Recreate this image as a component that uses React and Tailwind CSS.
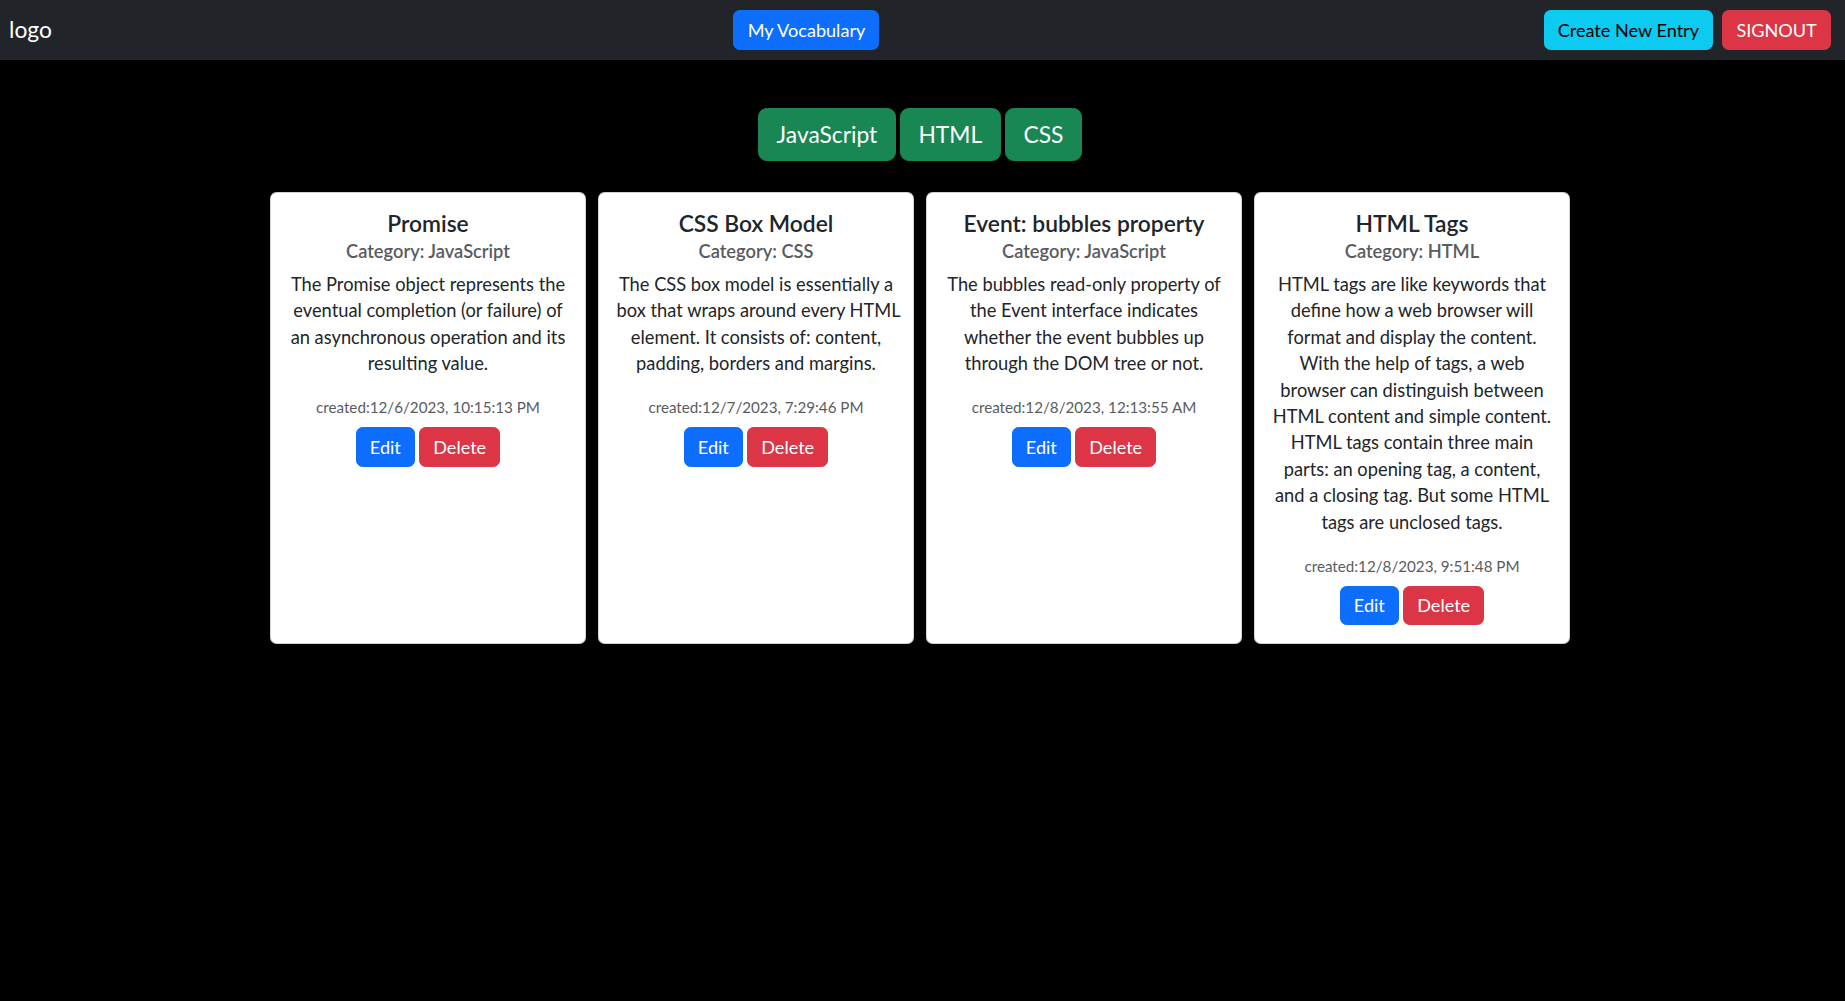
import React from "react";

const cards = [
  {
    title: "Promise",
    category: "JavaScript",
    lines: [
      "The Promise object represents the",
      "eventual completion (or failure) of",
      "an asynchronous operation and its",
      "resulting value.",
    ],
    created: "created:12/6/2023, 10:15:13 PM",
  },
  {
    title: "CSS Box Model",
    category: "CSS",
    lines: [
      "The CSS box model is essentially a",
      "box that wraps around every HTML",
      "element. It consists of: content,",
      "padding, borders and margins.",
    ],
    created: "created:12/7/2023, 7:29:46 PM",
  },
  {
    title: "Event: bubbles property",
    category: "JavaScript",
    lines: [
      "The bubbles read-only property of",
      "the Event interface indicates",
      "whether the event bubbles up",
      "through the DOM tree or not.",
    ],
    created: "created:12/8/2023, 12:13:55 AM",
  },
  {
    title: "HTML Tags",
    category: "HTML",
    lines: [
      "HTML tags are like keywords that",
      "define how a web browser will",
      "format and display the content.",
      "With the help of tags, a web",
      "browser can distinguish between",
      "HTML content and simple content.",
      "HTML tags contain three main",
      "parts: an opening tag, a content,",
      "and a closing tag. But some HTML",
      "tags are unclosed tags.",
    ],
    created: "created:12/8/2023, 9:51:48 PM",
  },
];

const btn =
  "text-[18.1px] leading-[24.2px] px-[13.2px] py-[6.6px] border rounded-[6.6px]";

function Card({ card }) {
  return (
    <div className="w-[316px] bg-white rounded-[6.6px] border border-[rgba(0,0,0,0.175)] p-[17.6px] text-center">
      <h5 className="text-[22.8px] leading-[26.4px] font-semibold text-[#212529] mb-[8.8px]">
        {card.title}
      </h5>
      <h6 className="text-[18.3px] leading-[21.1px] font-semibold text-[#595c5f] mt-[-4.4px] mb-[8.8px]">
        Category: {card.category}
      </h6>
      <p className="text-[18.3px] leading-[26.4px] text-[#212529] mb-[17.6px]">
        {card.lines.map((l, i) => (
          <span key={i} className="block whitespace-nowrap">
            {l}
          </span>
        ))}
      </p>
      <div className="text-[18.3px] leading-[25px] mb-[7px]">
        <small className="text-[15.2px] text-[#595c5f]">{card.created}</small>
      </div>
      <div className="flex justify-center gap-[4px]">
        <button className={`${btn} bg-[#0d6efd] text-white border-[#0d6efd]`}>Edit</button>
        <button className={`${btn} bg-[#dc3545] text-white border-[#dc3545]`}>Delete</button>
      </div>
    </div>
  );
}

export default function App() {
  return (
    <div className="min-h-[1001px] bg-black font-['Lato','Noto_Sans',sans-serif]">
      <nav className="h-[60px] bg-[#212529] flex items-center justify-between pl-[9px] pr-[14px]">
        <div className="text-[22.8px] leading-[30px] text-white mr-[17.6px] pb-[3px]">logo</div>
        <button className={`${btn} bg-[#0d6efd] text-white border-[#0d6efd]`}>
          My Vocabulary
        </button>
        <div className="flex gap-[9px]">
          <button className={`${btn} bg-[#0dcaf0] text-black border-[#0dcaf0]`}>
            Create New Entry
          </button>
          <button className={`${btn} bg-[#dc3545] text-white border-[#dc3545]`}>
            SIGNOUT
          </button>
        </div>
      </nav>
      <main className="pr-[5px]">
        <div className="flex justify-center gap-[4px] pt-[48px]">
          {["JavaScript", "HTML", "CSS"].map((t) => (
            <button
              key={t}
              className="bg-[#198754] text-white text-[22.8px] leading-[33px] px-[17.6px] py-[8.8px] border border-[#198754] rounded-[8.8px]"
            >
              {t}
            </button>
          ))}
        </div>
        <div className="flex justify-center items-stretch gap-[12px] mt-[31px]">
          {cards.map((c) => (
            <Card key={c.title} card={c} />
          ))}
        </div>
      </main>
    </div>
  );
}
